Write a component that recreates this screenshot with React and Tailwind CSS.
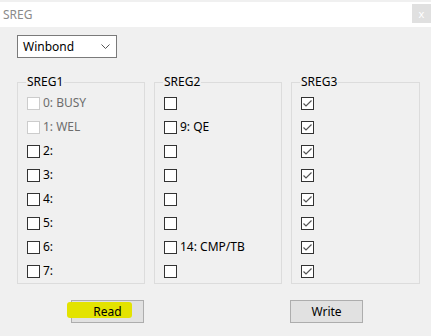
import { useState } from 'react'

const sreg1 = [
  { label: '0: BUSY', disabled: true },
  { label: '1: WEL', disabled: true },
  { label: '2:' },
  { label: '3:' },
  { label: '4:' },
  { label: '5:' },
  { label: '6:' },
  { label: '7:' },
]

const sreg2 = [
  { label: '' },
  { label: '9: QE' },
  { label: '' },
  { label: '' },
  { label: '' },
  { label: '' },
  { label: '14: CMP/TB' },
  { label: '' },
]

const sreg3 = Array.from({ length: 8 }, () => ({ label: '', checked: true }))

function Check({ item }) {
  const [checked, setChecked] = useState(!!item.checked)
  return (
    <div
      className="flex items-center h-[24px] gap-[3px] cursor-default"
      onClick={() => !item.disabled && setChecked(!checked)}
    >
      <div
        className={
          'w-[13px] h-[13px] border bg-white flex items-center justify-center ' +
          (item.disabled ? 'border-[#cccccc]' : 'border-[#333333]')
        }
      >
        {checked && (
          <svg width="11" height="11" viewBox="0 0 11 11">
            <path d="M1.5 5.5 L4 8 L9.5 2.5" fill="none" stroke="#555555" strokeWidth="1.2" />
          </svg>
        )}
      </div>
      {item.label && (
        <span className={item.disabled ? 'text-[#6d6d6d]' : 'text-black'}>{item.label}</span>
      )}
    </div>
  )
}

function Group({ title, items, width }) {
  return (
    <div className={'relative border border-[#dcdcdc] pt-[8px] pl-[9px] ' + width}>
      <span className="absolute -top-[9px] left-[8px] bg-[#f0f0f0] px-px leading-[16px] text-black">
        {title}
      </span>
      {items.map((it, i) => (
        <Check key={i} item={it} />
      ))}
    </div>
  )
}

export default function App() {
  return (
    <div
      className="w-[431px] h-[336px] bg-[#f0f0f0] text-[12px] overflow-hidden"
      style={{ fontFamily: '"Segoe UI", "Noto Sans", "Open Sans", sans-serif' }}
    >
      {/* Title bar */}
      <div className="mt-[2px] h-[25px] bg-white flex items-center justify-between">
        <span className="pl-[3px] text-[#8a8a8a] text-[12px]">SREG</span>
        <div className="w-[19px] h-[19px] bg-[#e0e0e0] flex items-center justify-center mb-[2px]">
          <span className="text-white text-[11px] leading-none">x</span>
        </div>
      </div>

      {/* Dropdown */}
      <div className="pl-[17px] pt-[8px]">
        <div className="w-[100px] h-[23px] border border-[#7a7a7a] bg-white flex items-center justify-between pl-[5px] pr-[6px]">
          <span className="text-black">Winbond</span>
          <svg width="9" height="6" viewBox="0 0 9 6">
            <path d="M0.5 0.5 L4.5 4.5 L8.5 0.5" fill="none" stroke="#555555" strokeWidth="1" />
          </svg>
        </div>
      </div>

      {/* Groups */}
      <div className="flex pl-[17px] pt-[24px] gap-[9px]">
        <Group title="SREG1" items={sreg1} width="w-[128px]" />
        <Group title="SREG2" items={sreg2} width="w-[128px]" />
        <Group title="SREG3" items={sreg3} width="w-[129px]" />
      </div>

      {/* Buttons */}
      <div className="flex pt-[16px]">
        <div className="ml-[71px] relative w-[73px] h-[23px] border border-[#adadad] bg-[#e1e1e1] flex items-center justify-center">
          <div className="absolute left-[-5px] top-[1px] w-[65px] h-[16px] bg-[#e3e300] rounded-[3px]" />
          <span className="relative text-black">Read</span>
        </div>
        <div className="ml-[146px] w-[73px] h-[23px] border border-[#adadad] bg-[#e1e1e1] flex items-center justify-center">
          <span className="text-black">Write</span>
        </div>
      </div>
    </div>
  )
}
